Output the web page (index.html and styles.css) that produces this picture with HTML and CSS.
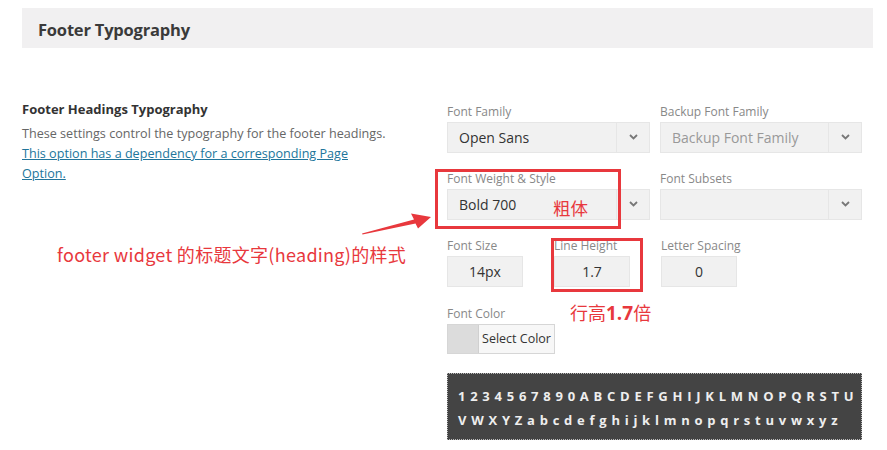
FILE: index.html
```html
<!DOCTYPE html>
<html lang="en">
<head>
<meta charset="utf-8">
<title>Footer Typography</title>
<link rel="stylesheet" href="styles.css">
</head>
<body>
<div class="page">
  <div class="band"><h2>Footer Typography</h2></div>
  <div class="section">
    <div class="desc">
      <h3>Footer Headings Typography</h3>
      <p>These settings control the typography for the footer headings.<br><a href="#">This option has a dependency for a corresponding Page<br>Option.</a></p>
    </div>
    <div class="fields">
      <div class="row two">
        <div class="field">
          <label>Font Family</label>
          <div class="select"><span class="val">Open Sans</span><span class="caret"><svg width="9" height="6" viewBox="0 0 9 6"><polyline points="1,1 4.5,4.5 8,1" fill="none" stroke="#777" stroke-width="1.8"/></svg></span></div>
        </div>
        <div class="field">
          <label>Backup Font Family</label>
          <div class="select"><span class="val placeholder">Backup Font Family</span><span class="caret"><svg width="9" height="6" viewBox="0 0 9 6"><polyline points="1,1 4.5,4.5 8,1" fill="none" stroke="#777" stroke-width="1.8"/></svg></span></div>
        </div>
      </div>
      <div class="row two">
        <div class="field">
          <label>Font Weight &amp; Style</label>
          <div class="select"><span class="val">Bold 700</span><span class="caret"><svg width="9" height="6" viewBox="0 0 9 6"><polyline points="1,1 4.5,4.5 8,1" fill="none" stroke="#777" stroke-width="1.8"/></svg></span></div>
        </div>
        <div class="field">
          <label>Font Subsets</label>
          <div class="select"><span class="val"></span><span class="caret"><svg width="9" height="6" viewBox="0 0 9 6"><polyline points="1,1 4.5,4.5 8,1" fill="none" stroke="#777" stroke-width="1.8"/></svg></span></div>
        </div>
      </div>
      <div class="row three">
        <div class="field">
          <label>Font Size</label>
          <div class="input">14px</div>
        </div>
        <div class="field">
          <label>Line Height</label>
          <div class="input">1.7</div>
        </div>
        <div class="field">
          <label>Letter Spacing</label>
          <div class="input">0</div>
        </div>
      </div>
      <div class="row">
        <div class="field">
          <label>Font Color</label>
          <div class="color"><span class="swatch"></span><span class="btn">Select Color</span></div>
        </div>
      </div>
      <div class="preview">1234567890ABCDEFGHIJKLMNOPQRSTU<br>VWXYZabcdefghijklmnopqrstuvwxyz</div>
    </div>
  </div>

  <div class="mark box-weight"></div>
  <div class="mark box-line"></div>
  <div class="note note-weight">粗体</div>
  <div class="note note-line">行高<b>1.7</b>倍</div>
  <div class="note note-main">footer widget 的标题文字(heading)的样式</div>
  <svg class="arrow" width="887" height="450" viewBox="0 0 887 450">
    <polygon points="362,233.5 414,219.5 411,213.5 431,217 418,228.5 415.5,223.5 362.5,234.5" fill="#e8383d"/>
  </svg>
</div>
</body>
</html>
```

FILE: styles.css
```css
* { box-sizing: border-box; }

body {
  margin: 0;
  font-family: "Open Sans", "Noto Sans CJK SC", sans-serif;
  background: #fff;
  color: #333;
}

.page {
  position: relative;
  width: 887px;
  height: 450px;
  padding: 8px 14px 0 22px;
  overflow: hidden;
}

.band {
  width: 851px;
  height: 40px;
  background: #f1f0f1;
  display: flex;
  align-items: center;
  padding-left: 16px;
  padding-top: 2px;
}

.band h2 {
  margin: 0;
  font-size: 16.5px;
  font-weight: 700;
  color: #3a3a3a;
  letter-spacing: -0.2px;
}

.section {
  display: grid;
  grid-template-columns: 425px 415px;
  margin-top: 52px;
}

.desc h3 {
  margin: 0 0 6px;
  font-size: 13px;
  line-height: 18px;
  font-weight: 700;
  color: #333;
}

.desc p {
  margin: 0;
  font-size: 12.6px;
  line-height: 20px;
  color: #666;
}

.desc a {
  color: #21759b;
  text-decoration: underline;
}

.fields {
  padding-top: 3px;
}

.row {
  display: grid;
  margin-bottom: 17.5px;
}

.row.two {
  grid-template-columns: 203px 202px;
  column-gap: 10px;
}

.row.three {
  grid-template-columns: 76px 76px 76px;
  column-gap: 31px;
  margin-bottom: 18.5px;
}

.field label {
  display: block;
  font-size: 12px;
  line-height: 17px;
  color: #888;
  margin-bottom: 1.5px;
  white-space: nowrap;
}

.select {
  display: flex;
  height: 31px;
  background: #f1f1f1;
  border: 1px solid #e6e6e6;
}

.select .val {
  flex: 1;
  padding-left: 11px;
  font-size: 14px;
  line-height: 29px;
  color: #333;
}

.select .val.placeholder {
  color: #999;
}

.select .caret {
  width: 33px;
  border-left: 1px solid #e6e6e6;
  display: flex;
  align-items: center;
  justify-content: center;
}

.input {
  height: 31px;
  background: #f1f1f1;
  border: 1px solid #e6e6e6;
  font-size: 14px;
  line-height: 29px;
  text-align: center;
  color: #333;
}

.color {
  display: flex;
  width: 108px;
  height: 30px;
  border: 1px solid #d6d6d6;
}

.color .swatch {
  width: 31px;
  background: #dcdcdc;
  border-right: 1px solid #d0d0d0;
}

.color .btn {
  flex: 1;
  background: #f7f7f7;
  font-size: 12.5px;
  line-height: 28px;
  text-align: center;
  color: #333;
}

.preview {
  width: 415px;
  height: 67px;
  margin-top: 19px;
  background: #444;
  border: 1px dotted #bbb;
  padding: 10px 0 0 10px;
  font-size: 13px;
  line-height: 24px;
  font-weight: 700;
  color: #eee;
  letter-spacing: 4.75px;
  white-space: nowrap;
  overflow: hidden;
}

.mark {
  position: absolute;
  border: 3px solid #e8383d;
}

.box-weight {
  left: 435px;
  top: 169px;
  width: 186px;
  height: 60px;
}

.box-line {
  left: 551px;
  top: 238px;
  width: 92px;
  height: 54px;
}

.note {
  position: absolute;
  color: #e8383d;
  font-family: "Noto Sans CJK SC", "Open Sans", sans-serif;
  white-space: nowrap;
}

.note-weight {
  left: 553px;
  top: 196px;
  font-size: 17.5px;
  line-height: 24px;
}

.note-line {
  left: 570px;
  top: 300px;
  font-size: 18px;
  line-height: 24px;
}

.note-line b {
  font-family: "Open Sans", sans-serif;
  font-weight: 700;
  font-size: 19px;
}

.note-main {
  left: 57px;
  top: 241px;
  font-size: 18px;
  line-height: 26px;
  letter-spacing: 0.3px;
}

.arrow {
  position: absolute;
  left: 0;
  top: 0;
  pointer-events: none;
}
```
